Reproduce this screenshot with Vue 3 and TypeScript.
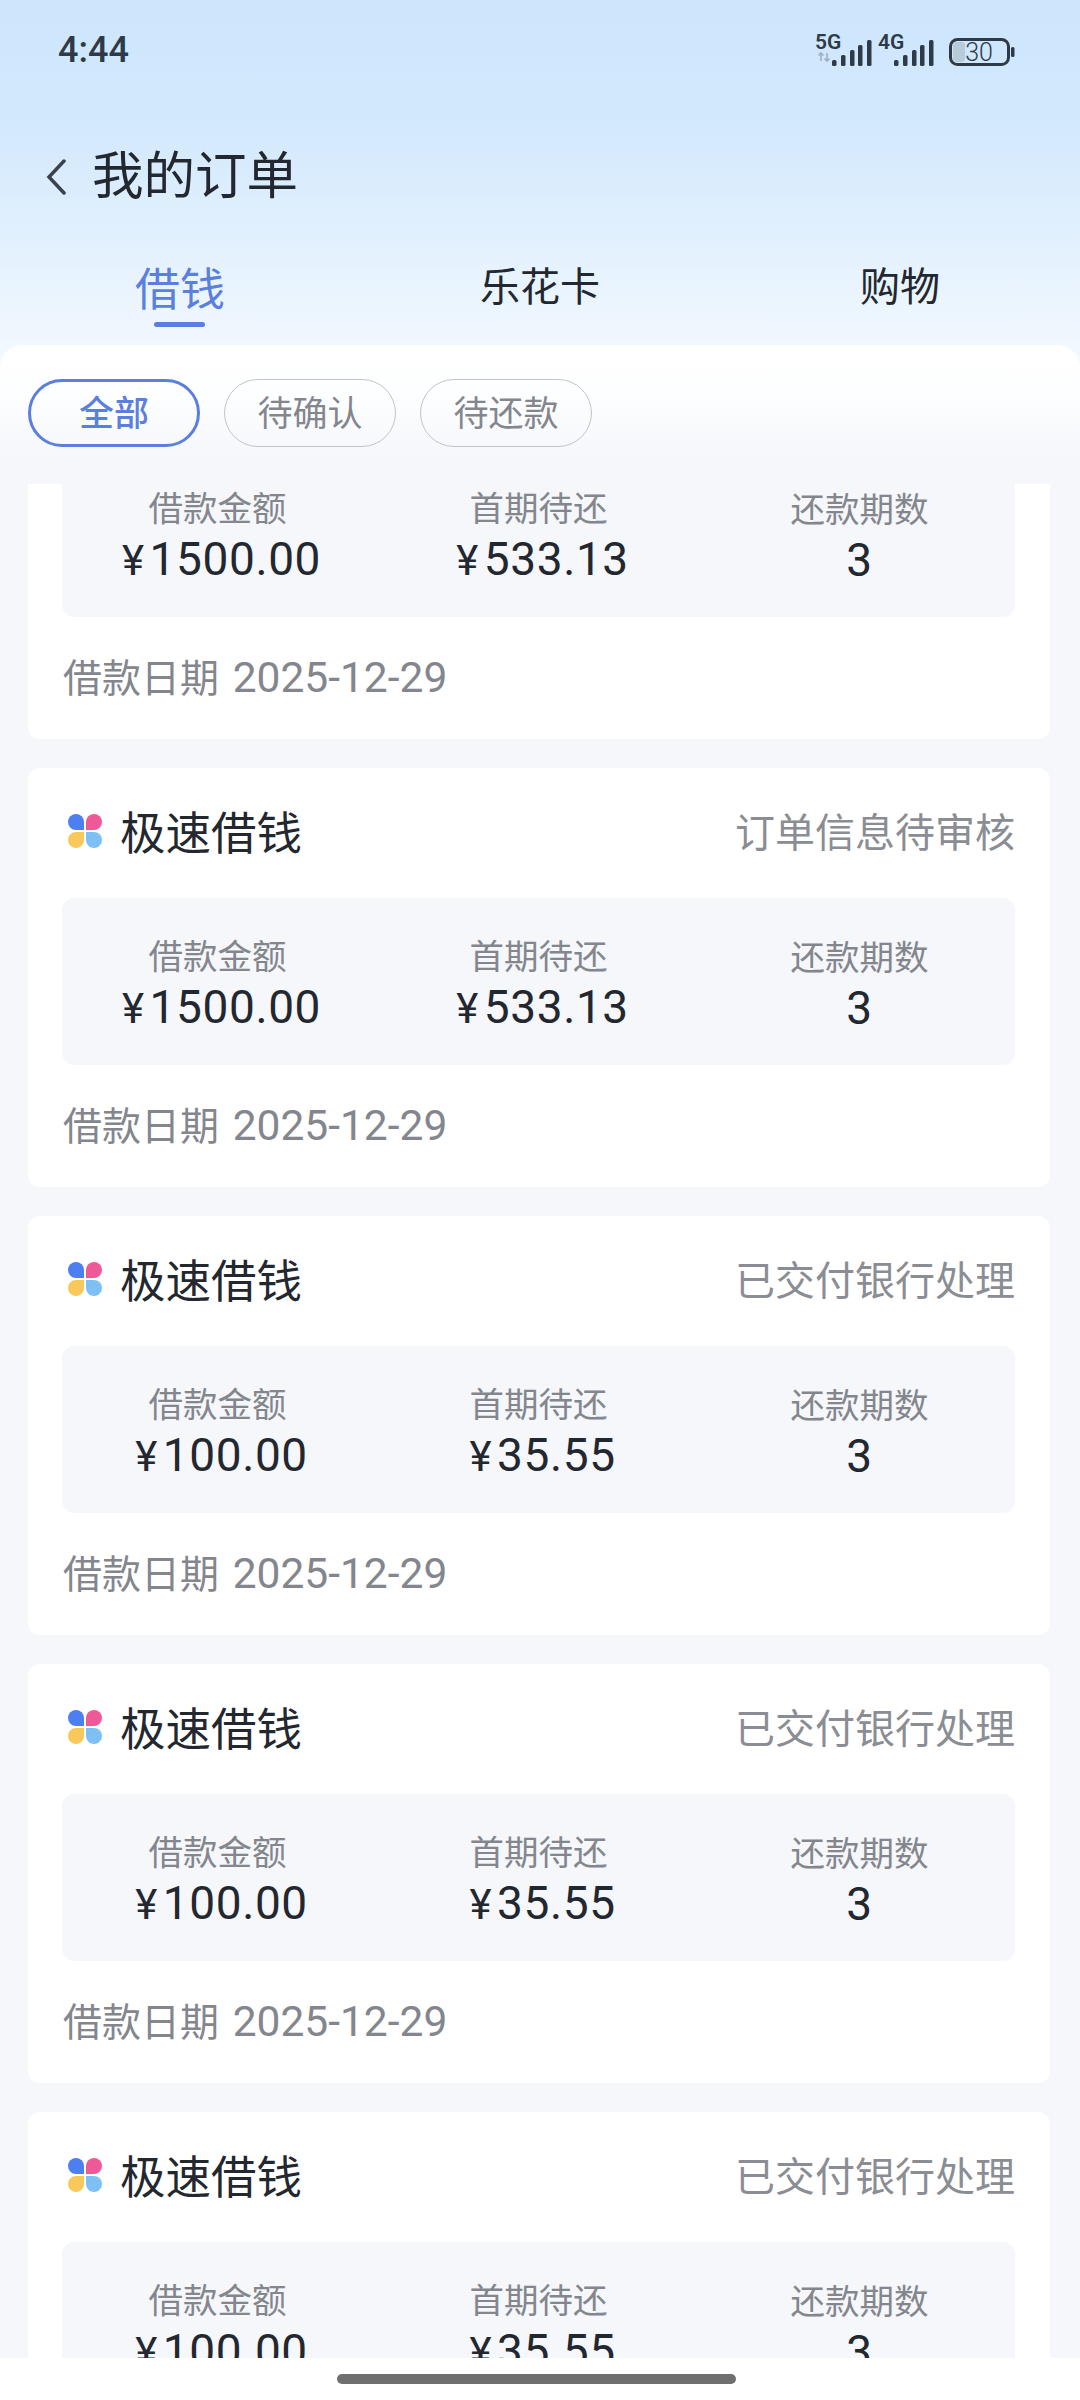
<script setup lang="ts">
interface Order { status: string; amount: string; first: string; terms: number }
const orders: Order[] = [
  { status: '订单信息待审核', amount: '1500.00', first: '533.13', terms: 3 },
  { status: '订单信息待审核', amount: '1500.00', first: '533.13', terms: 3 },
  { status: '已交付银行处理', amount: '100.00', first: '35.55', terms: 3 },
  { status: '已交付银行处理', amount: '100.00', first: '35.55', terms: 3 },
  { status: '已交付银行处理', amount: '100.00', first: '35.55', terms: 3 },
]
const tabs = ['借钱', '乐花卡', '购物']
const filters = ['全部', '待确认', '待还款']
const barX = [0, 9, 18, 26, 35]
const barTop = [20, 15, 10, 5, 0]
</script>

<template>
  <div class="page">
    <header class="head">
      <div class="status">
        <span class="time">4:44</span>
        <svg class="sys" width="200" height="40" viewBox="0 -4 200 40">
          <text x="0" y="15" class="net">5G</text>
          <path d="M6 19v8M3.500 21.500L6 19l2.500 2.500M12 27v-8M9.500 24.500L12 27l2.500-2.500" fill="none" stroke="#9fb0bf" stroke-width="1.600" />
          <rect v-for="(x, i) in barX" :key="'a' + i" :x="17 + x" :y="6 + barTop[i]" width="4.500" :height="26 - barTop[i]" rx="1.500" fill="#2e3a47" />
          <text x="63" y="15" class="net">4G</text>
          <rect v-for="(x, i) in barX" :key="'b' + i" :x="79 + x" :y="6 + barTop[i]" width="4.500" :height="26 - barTop[i]" rx="1.500" fill="#2e3a47" />
          <rect x="135.500" y="5.500" width="58" height="25" rx="7" fill="none" stroke="#2e3a47" stroke-width="3" />
          <rect x="138" y="8" width="12" height="20" rx="4" fill="#b9cad8" />
          <text x="164" y="27" class="batt" text-anchor="middle">30</text>
          <rect x="196" y="13" width="3.500" height="10" rx="1.500" fill="#2e3a47" />
        </svg>
      </div>
      <div class="nav">
        <svg class="back" width="22" height="36" viewBox="0 0 22 36">
          <path d="M19 2L4 18l15 16" fill="none" stroke="#3a424c" stroke-width="3.500" stroke-linecap="round" />
        </svg>
        <h1 class="title">我的订单</h1>
      </div>
      <div class="tabs">
        <div v-for="(t, i) in tabs" :key="t" class="tab" :class="{ on: i === 0 }">
          <span>{{ t }}</span>
        </div>
      </div>
    </header>

    <main class="panel">
      <div class="filters">
        <span v-for="(f, i) in filters" :key="f" class="pill" :class="{ on: i === 0 }">{{ f }}</span>
      </div>
      <div class="list">
        <article v-for="(o, i) in orders" :key="i" class="card">
          <div class="card-head">
            <svg class="logo" width="34" height="34" viewBox="0 0 34 34">
              <path d="M16 16H8a8 8 0 1 1 8-8z" fill="#4d7ff0" />
              <path d="M18 16h8a8 8 0 1 0-8-8z" fill="#ee5a98" />
              <path d="M16 18H8a8 8 0 1 0 8 8z" fill="#f8c95a" />
              <path d="M18 18h8a8 8 0 1 1-8 8z" fill="#7cc0f6" />
            </svg>
            <span class="name">极速借钱</span>
            <span class="state">{{ o.status }}</span>
          </div>
          <div class="box">
            <div class="cell">
              <span class="label">借款金额</span>
              <span class="value"><i class="yen">¥</i>{{ o.amount }}</span>
            </div>
            <div class="cell">
              <span class="label">首期待还</span>
              <span class="value"><i class="yen">¥</i>{{ o.first }}</span>
            </div>
            <div class="cell">
              <span class="label">还款期数</span>
              <span class="value">{{ o.terms }}</span>
            </div>
          </div>
          <div class="date">借款日期 <span class="date-num">2025-12-29</span></div>
        </article>
      </div>
      <footer class="home"><span class="bar"></span></footer>
    </main>
  </div>
</template>

<style scoped>
.page {
  width: 1080px;
  height: 2400px;
  display: flex;
  flex-direction: column;
  overflow: hidden;
  background: linear-gradient(180deg, #cde6fc 0, #d3e9fd 130px, #f1f8fe 345px, #f1f8fe 100%);
  font-family: Roboto, "Noto Sans CJK SC", sans-serif;
  color: #23272f;
}
.head {
  height: 345px;
  flex: none;
  display: flex;
  flex-direction: column;
}
.status {
  flex: none;
  height: 100px;
  padding: 0 64px 0 58px;
  display: flex;
  justify-content: space-between;
  align-items: center;
}
.time {
  font-size: 36px;
  font-weight: 500;
  color: #2e3a47;
}
.sys { margin-right: 1px; }
.net { font: 600 21px Roboto, sans-serif; fill: #2e3a47; }
.batt { font: 300 25px Roboto, sans-serif; fill: #2e3a47; }
.nav {
  flex: none;
  height: 78px;
  margin-top: 38px;
  padding-left: 45px;
  display: flex;
  align-items: center;
  gap: 25px;
}
.title {
  margin: 0;
  font-size: 51.500px;
  line-height: 78px;
  font-weight: 400;
}
.tabs {
  flex: none;
  margin-top: 40px;
  height: 89px;
  display: grid;
  grid-template-columns: repeat(3, 1fr);
}
.tab {
  display: flex;
  justify-content: center;
  align-items: flex-start;
  font-size: 40px;
  line-height: 56px;
  padding-top: 4px;
}
.tab.on {
  position: relative;
  font-size: 45px;
  color: #5b7fdf;
  padding-top: 7px;
}
.tab.on::after {
  content: "";
  position: absolute;
  left: 154px;
  top: 66px;
  width: 51px;
  height: 5px;
  border-radius: 3px;
  background: #5b7fdf;
}
.panel {
  flex: 1;
  min-height: 0;
  display: flex;
  flex-direction: column;
  border-radius: 22px 22px 0 0;
  background: linear-gradient(180deg, #ffffff 0, #fdfeff 50px, #f5f7fb 112px);
}
.filters {
  flex: none;
  height: 139px;
  padding: 34px 28px 0;
  box-sizing: border-box;
  display: flex;
  gap: 24px;
  align-items: flex-start;
}
.pill {
  width: 172px;
  height: 68px;
  box-sizing: border-box;
  border: 1px solid #c2c4c8;
  border-radius: 34px;
  padding-bottom: 5px;
  display: flex;
  align-items: center;
  justify-content: center;
  font-size: 35px;
  color: #83868d;
}
.pill.on {
  border: 3px solid #5b7fdf;
  color: #5b7fdf;
  font-weight: 500;
}
.list {
  flex: 1;
  min-height: 0;
  overflow: hidden;
  padding: 0 30px 0 28px;
  display: flex;
  flex-direction: column;
  gap: 29px;
}
.card {
  flex: none;
  height: 419px;
  background: #fff;
  border-radius: 12px;
  display: flex;
  flex-direction: column;
}
.card:first-child { margin-top: -164px; }
.card-head {
  height: 129px;
  flex: none;
  display: flex;
  align-items: center;
  padding: 0 35px 6px 40px;
  box-sizing: border-box;
}
.logo { flex: none; margin-top: 2px; }
.name {
  margin-left: 18px;
  font-size: 45.500px;
}
.state {
  margin-left: auto;
  font-size: 40px;
  color: #8a8d93;
}
.box {
  flex: none;
  height: 167px;
  margin: 1px 35px 0 34px;
  padding-top: 7px;
  box-sizing: border-box;
  border-radius: 12px;
  background: #f5f7fb;
  display: grid;
  grid-template-columns: repeat(3, 321px);
  justify-content: center;
  align-items: center;
}
.cell {
  display: flex;
  flex-direction: column;
  align-items: center;
}
.label {
  font-size: 34.500px;
  line-height: 46px;
  color: #83868d;
}
.value {
  font-size: 46px;
  line-height: 54px;
  letter-spacing: 0.600px;
  color: #23272f;
}
.yen {
  font-style: normal;
  font-size: 42px;
  margin: 0 5px 0 8px;
}
.date {
  height: 122px;
  padding-left: 35px;
  font-size: 39px;
  line-height: 122px;
  color: #83868d;
}
.date-num { font-size: 42.500px; margin-left: 4px; }
.home {
  flex: none;
  height: 42px;
  background: #fff;
  display: flex;
  justify-content: center;
  padding: 16px 8px 0 0;
  box-sizing: border-box;
}
.bar {
  width: 399px;
  height: 10px;
  border-radius: 5px;
  background: #6f6f6f;
}
</style>

<style>
html, body { margin: 0; padding: 0; }
</style>
